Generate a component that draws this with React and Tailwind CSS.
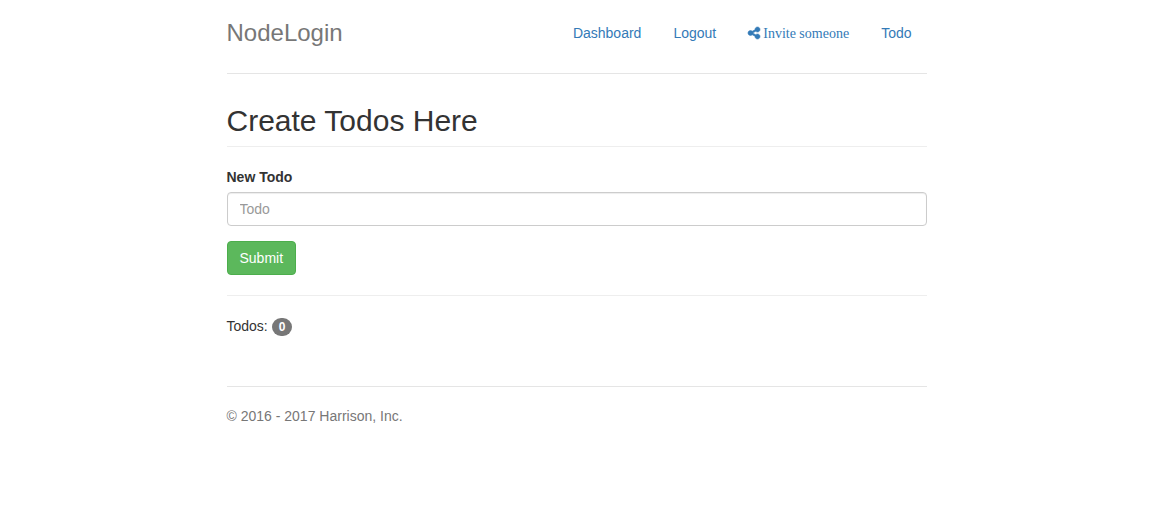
const links = [
  { label: "Dashboard", href: "#dashboard" },
  { label: "Logout", href: "#logout" },
  { label: "Invite someone", href: "#invite", share: true },
  { label: "Todo", href: "#todo" },
];

function ShareIcon() {
  return (
    <svg
      viewBox="128 128 1536 1536"
      className="size-3 overflow-visible"
      fill="currentColor"
      stroke="currentColor"
      strokeWidth="70"
      aria-hidden="true"
    >
      <path d="M1344 1024q133 0 226.5 93.5t93.5 226.5-93.5 226.5-226.5 93.5-226.5-93.5-93.5-226.5q0-12 2-34l-360-180q-92 86-218 86-133 0-226.5-93.5t-93.5-226.5 93.5-226.5 226.5-93.5q126 0 218 86l360-180q-2-22-2-34 0-133 93.5-226.5t226.5-93.5 226.5 93.5 93.5 226.5-93.5 226.5-226.5 93.5q-126 0-218-86l-360 180q2 22 2 34t-2 34l360 180q92-86 218-86z" />
    </svg>
  );
}

function NavLink({ link }) {
  return (
    <a href={link.href} className="block px-[15px] py-2.5 text-[#337ab7]">
      {link.share ? (
        <span className="inline-flex items-baseline gap-[3px] font-['Liberation_Serif',serif] leading-none">
          <span className="self-start">
            <ShareIcon />
          </span>
          {link.label}
        </span>
      ) : (
        link.label
      )}
    </a>
  );
}

export default function App() {
  return (
    <div className="pr-1 font-['Liberation_Sans',Arial,sans-serif] text-sm leading-5 text-[#333]">
      <div className="mx-auto max-w-[700px] pt-[13px] pb-5">
        <header className="mb-[30px] flex items-center justify-between border-b border-[#e5e5e5] pb-5">
          <h3 className="text-2xl leading-10 text-[#777]">NodeLogin</h3>
          <nav>
            <ul className="flex gap-0.5">
              {links.map((link) => (
                <li key={link.label}>
                  <NavLink link={link} />
                </li>
              ))}
            </ul>
          </nav>
        </header>

        <main>
          <h2 className="mb-5 border-b border-[#eee] pb-[9px] text-3xl leading-[33px]">Create Todos Here</h2>
          <form onSubmit={(e) => e.preventDefault()}>
            <label htmlFor="todo" className="mb-[5px] block font-bold">New Todo</label>
            <input
              id="todo"
              type="text"
              placeholder="Todo"
              className="mb-[15px] block h-[34px] w-full rounded border border-[#ccc] bg-white px-3 text-[#555] shadow-[inset_0_1px_1px_rgba(0,0,0,0.075)] placeholder:text-[#999]"
            />
            <button type="submit" className="block h-[34px] rounded border border-[#4cae4c] bg-[#5cb85c] px-3 text-white">
              Submit
            </button>
          </form>
          <hr className="my-5 border-[#eee]" />
          <p>
            Todos:{" "}
            <span className="inline-block rounded-[10px] bg-[#777] px-[7px] py-[3px] align-middle text-xs leading-3 font-bold text-white">0</span>
          </p>
        </main>

        <footer className="mt-[50px] border-t border-[#e5e5e5] pt-[19px] text-[#777]">
          <p>© 2016 - 2017 Harrison, Inc.</p>
        </footer>
      </div>
    </div>
  );
}
